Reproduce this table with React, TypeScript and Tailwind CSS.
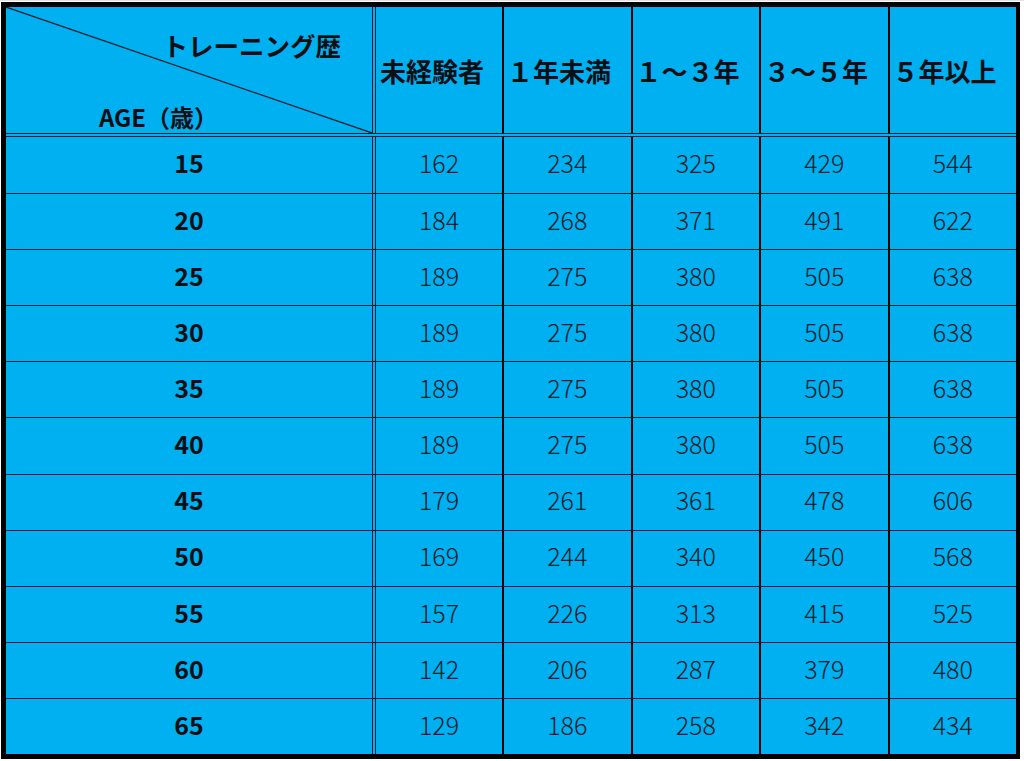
import React from "react";

const headers = ["未経験者", "１年未満", "１～３年", "３～５年", "５年以上"];

const rows: number[][] = [
  [15, 162, 234, 325, 429, 544],
  [20, 184, 268, 371, 491, 622],
  [25, 189, 275, 380, 505, 638],
  [30, 189, 275, 380, 505, 638],
  [35, 189, 275, 380, 505, 638],
  [40, 189, 275, 380, 505, 638],
  [45, 179, 261, 361, 478, 606],
  [50, 169, 244, 340, 450, 568],
  [55, 157, 226, 313, 415, 525],
  [60, 142, 206, 287, 379, 480],
  [65, 129, 186, 258, 342, 434],
];

const font = { fontFamily: '"Noto Sans CJK JP", "Noto Sans", sans-serif' };

export default function App() {
  return (
    <div
      className="w-[1024px] h-[761px] bg-white overflow-hidden border-t border-[#e3e3e3]"
      style={font}
    >
      <div className="ml-[1px] mt-[1px] w-[1019px] border-black border-l-[5px] border-t-[5px] border-r-[4px] border-b-[5px] bg-[#00b0f0] flex flex-col text-[#0a0f14]">
        {/* header row */}
        <div className="flex h-[130px] border-b-[4px] border-double border-[#0d1b2a]">
          <div className="relative w-[366px] flex flex-col justify-between">
            <svg
              className="absolute inset-0 w-full h-full"
              viewBox="0 0 366 126"
              preserveAspectRatio="none"
            >
              <line x1="0" y1="0" x2="366" y2="126" stroke="#0d1b2a" strokeWidth="1.2" />
            </svg>
            <div className="relative self-end mr-[31px] mt-[23px] text-[25.5px] font-bold leading-[30px]">
              トレーニング歴
            </div>
            <div className="relative self-start ml-[93px] mb-[1px] text-[24px] font-bold leading-[30px]">
              AGE（歳）
            </div>
          </div>
          {headers.map((h, i) => (
            <div
              key={h}
              className={
                i === 0
                  ? "w-[130px] border-l-[4px] border-double border-[#0d1b2a] flex items-center justify-start pl-[4px] pt-[1px] text-[26px] font-bold whitespace-nowrap"
                  : "w-[128.5px] border-l-[2.5px] border-black flex items-center justify-start pl-[3px] pt-[1px] text-[26px] font-bold whitespace-nowrap"
              }
            >
              {h}
            </div>
          ))}
        </div>
        {/* data rows */}
        {rows.map((r, ri) => (
          <div
            key={r[0]}
            className={
              ri === 0
                ? "flex h-[56.1px]"
                : "flex h-[56.1px] border-t-[1.5px] border-[#0d1b2a]"
            }
          >
            <div className="w-[366px] flex items-center justify-center pb-[4px] text-[25px] font-bold">
              {r[0]}
            </div>
            {r.slice(1).map((v, ci) => (
              <div
                key={ci}
                className={
                  ci === 0
                    ? "w-[130px] border-l-[4px] border-double border-[#0d1b2a] flex items-center justify-center pb-[4px] text-[25px] font-light text-[#0d1b2a]"
                    : "w-[128.5px] border-l-[2.5px] border-black flex items-center justify-center pb-[4px] text-[25px] font-light text-[#0d1b2a]"
                }
              >
                {v}
              </div>
            ))}
          </div>
        ))}
      </div>
    </div>
  );
}
